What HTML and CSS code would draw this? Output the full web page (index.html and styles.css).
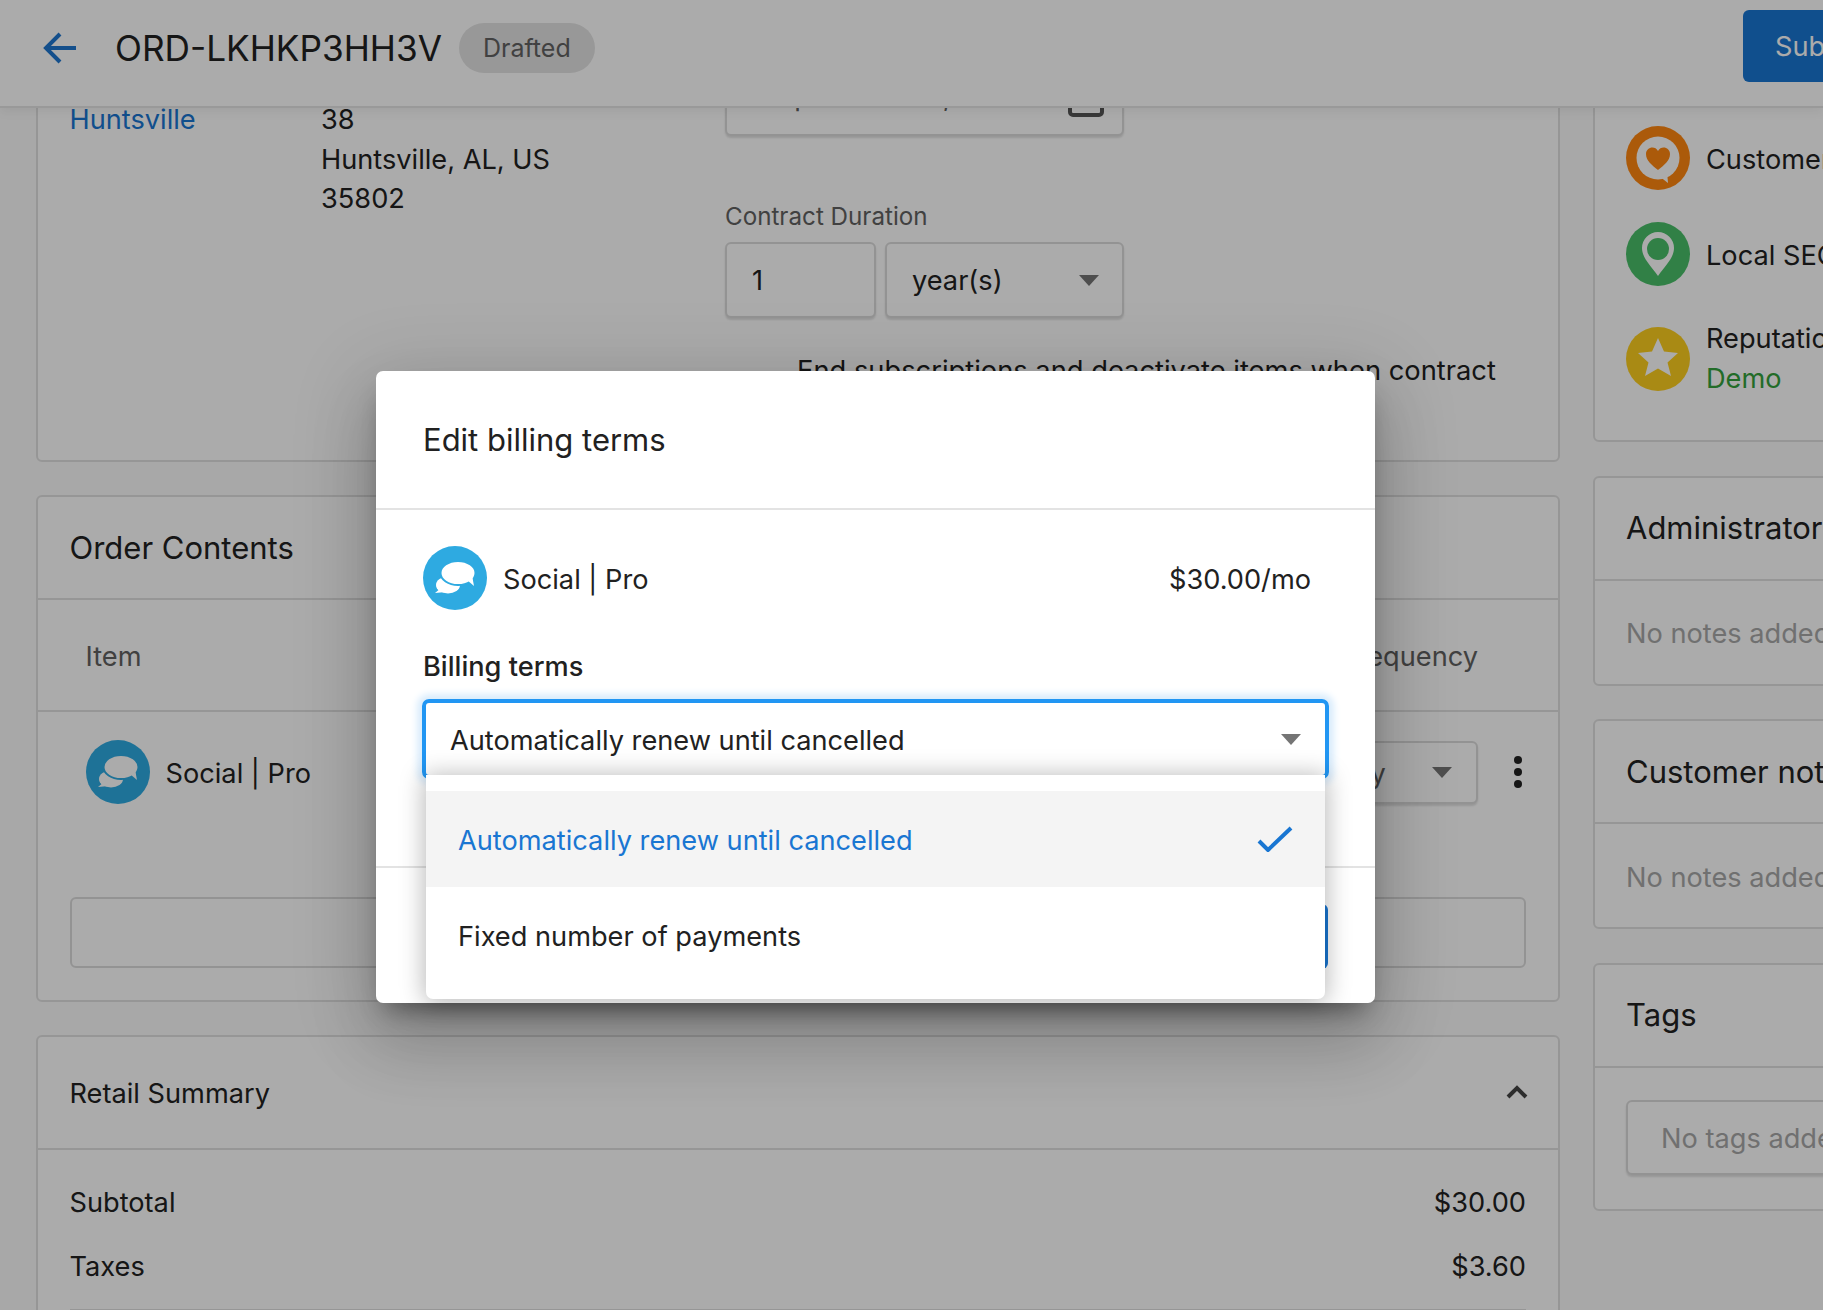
FILE: index.html
```html
<!DOCTYPE html>
<html>
  <head>
    <meta charset="UTF-8">
    <title>ORD-LKHKP3HH3V</title>
    <link rel="stylesheet" href="styles.css">
  </head>
  <body>
    <div class="page">
      <header class="topbar">
        <div class="topbar-main">
          <svg class="back-arrow" viewBox="0 0 34 32" width="34" height="32"><path d="M33 16H3M17 2L3 16l14 14" fill="none" stroke="#1e76d0" stroke-width="4"/></svg>
          <h1 class="order-id">ORD-LKHKP3HH3V</h1>
          <span class="badge">Drafted</span>
        </div>
        <button class="btn-primary" type="button">Submit</button>
      </header>

      <div class="scroller">
        <div class="columns">
          <main class="col-main">
            <section class="card card-details">
              <div class="details-location"><a class="link">Huntsville</a></div>
              <div class="details-address">38<br>Huntsville, AL, US<br>35802</div>
              <div class="details-form">
                <div class="field field-date">
                  <span class="date-text">September 30, 2022</span>
                  <svg class="calendar" viewBox="0 0 36 36" width="36" height="36"><rect x="2" y="2" width="32" height="32" rx="3" fill="none" stroke="#555" stroke-width="4"/></svg>
                </div>
                <div class="field-label">Contract Duration</div>
                <div class="duration">
                  <div class="field field-qty"><span class="txt-small">1</span></div>
                  <div class="field field-unit"><span class="txt-small">year(s)</span><span class="caret"></span></div>
                </div>
                <div class="end-option">End subscriptions and deactivate items when contract ends</div>
              </div>
            </section>

            <section class="card card-contents">
              <div class="card-head"><h2>Order Contents</h2></div>
              <div class="table-head"><span>Item</span><span>Frequency</span></div>
              <div class="table-row">
                <div class="product">
                  <svg class="app-icon" viewBox="0 0 64 64" width="64" height="64"><use href="#icon-social"/></svg>
                  <span class="txt">Social | Pro</span>
                </div>
                <div class="row-tools">
                  <div class="field field-freq"><span class="txt">Monthly</span><span class="caret"></span></div>
                  <div class="kebab"><i></i><i></i><i></i></div>
                </div>
              </div>
              <div class="field field-wide"></div>
            </section>

            <section class="card card-summary">
              <div class="card-head summary-head">
                <span class="txt-small">Retail Summary</span>
                <svg viewBox="0 0 22 14" width="22" height="14"><path d="M2 12l9-9 9 9" fill="none" stroke="#444" stroke-width="4"/></svg>
              </div>
              <div class="summary-rows">
                <div class="summary-row"><span>Subtotal</span><span>$30.00</span></div>
                <div class="summary-row"><span>Taxes</span><span>$3.60</span></div>
                <div class="summary-rule"></div>
                <div class="summary-row"><span>Total</span><span>$33.60</span></div>
              </div>
            </section>
          </main>

          <aside class="col-side">
            <section class="card card-apps">
              <div class="app-row">
                <svg class="app-icon" viewBox="0 0 64 64" width="64" height="64">
                  <circle cx="32" cy="32" r="32" fill="#ff8710"/>
                  <circle cx="32" cy="32" r="21.5" fill="#fff"/>
                  <path d="M33 50l9 7-1-11z" fill="#fff"/>
                  <path d="M32 44C26 39 20 35 20 28c0-7 9-9 12-3 3-6 12-4 12 3 0 7-6 11-12 16z" fill="#ff8710"/>
                </svg>
                <span class="txt">Customer Voice</span>
              </div>
              <div class="app-row">
                <svg class="app-icon" viewBox="0 0 64 64" width="64" height="64">
                  <circle cx="32" cy="32" r="32" fill="#4abf69"/>
                  <path d="M32 54C25 44 16 36 16 26a16 16 0 0 1 32 0C48 36 39 44 32 54z" fill="#fff"/>
                  <circle cx="32" cy="27" r="11" fill="#4abf69"/>
                </svg>
                <span class="txt">Local SEO</span>
              </div>
              <div class="app-row">
                <svg class="app-icon" viewBox="0 0 64 64" width="64" height="64">
                  <circle cx="32" cy="32" r="32" fill="#fdce1f"/>
                  <path d="M32 11l6 13.500 14 1.500-10.500 9.500L45 49l-13-7.500L19 49l3.500-13.500L12 26l14-1.500z" fill="#fff"/>
                </svg>
                <div class="app-lines">Reputation Management<br><span class="demo">Demo</span></div>
              </div>
            </section>

            <section class="card card-note">
              <div class="card-head"><h2>Administrator notes</h2></div>
              <div class="note-body">No notes added</div>
            </section>

            <section class="card card-note">
              <div class="card-head"><h2>Customer notes</h2></div>
              <div class="note-body">No notes added</div>
            </section>

            <section class="card card-tags">
              <div class="card-head"><h2>Tags</h2></div>
              <div class="tags-body"><div class="field field-tags"><span class="txt">No tags added</span></div></div>
            </section>
          </aside>
        </div>
      </div>

      <div class="backdrop"></div>

      <div class="modal">
        <div class="modal-head">Edit billing terms</div>
        <div class="modal-body">
          <div class="modal-product">
            <div class="product">
              <svg class="app-icon" viewBox="0 0 64 64" width="64" height="64"><use href="#icon-social"/></svg>
              <span class="txt">Social | Pro</span>
            </div>
            <span class="modal-price txt">$30.00/mo</span>
          </div>
          <div class="modal-label">Billing terms</div>
          <div class="modal-select"><span class="txt">Automatically renew until cancelled</span><span class="caret"></span></div>
        </div>
        <div class="modal-foot">
          <button class="btn-primary btn-save" type="button">Save</button>
        </div>

        <ul class="dropdown">
          <li class="option option-active">
            <span class="txt">Automatically renew until cancelled</span>
            <svg viewBox="0 0 36 26" width="36" height="26"><path d="M2 15l9 9L34 2" fill="none" stroke="#1976d2" stroke-width="4"/></svg>
          </li>
          <li class="option"><span class="txt">Fixed number of payments</span></li>
        </ul>
      </div>
    </div>

    <svg class="icon-defs" width="0" height="0">
      <symbol id="icon-social" viewBox="0 0 64 64">
        <circle cx="32" cy="32" r="32" fill="#2eaae1"/>
        <ellipse cx="25" cy="39" rx="12" ry="8.500" fill="#fff"/>
        <path d="M18 42l-6 5 11-1z" fill="#fff"/>
        <ellipse cx="35" cy="27" rx="17.500" ry="12" fill="#fff" stroke="#2eaae1" stroke-width="2"/>
        <path d="M44 34l7 6-2-11z" fill="#fff"/>
      </symbol>
    </svg>
  </body>
</html>
```

FILE: styles.css
```css
* {
  box-sizing: border-box;
}
html, body {
  margin: 0;
  height: 100%;
  overflow: hidden;
}
body {
  font-family: Inter, "Liberation Sans", sans-serif;
  font-size: 27.200px;
  line-height: 40px;
  color: #212121;
  background-color: #fbfbfb;
}
h1, h2, ul {
  margin: 0;
  padding: 0;
  font-weight: 400;
}
.page {
  position: relative;
  width: 1823px;
  height: 1310px;
  overflow: hidden;
}
.icon-defs {
  position: absolute;
}
.txt {
  padding-top: 4px;
}
.txt-small {
  padding-top: 2px;
}

/* top bar */
.topbar {
  position: relative;
  z-index: 1;
  display: flex;
  align-items: center;
  height: 108px;
  padding: 0 0 14px 43px;
  background-color: #fff;
  border-bottom: 2px solid #e4e4e4;
  box-shadow: 0 4px 10px rgba(0, 0, 0, 0.06);
}
.topbar-main {
  flex: 0 0 1700px;
  display: flex;
  align-items: center;
  padding-top: 4px;
}
.back-arrow {
  margin-right: 38px;
}
.order-id {
  font-size: 35.200px;
  margin-right: 17px;
}
.badge {
  height: 50px;
  line-height: 50px;
  padding: 0 24px;
  border-radius: 25px;
  background-color: #e3e3e3;
  color: #616161;
  font-size: 25px;
}
.btn-primary {
  flex: none;
  height: 72px;
  width: 200px;
  text-align: left;
  padding: 0 32px;
  border: none;
  border-radius: 6px;
  background-color: #1976d2;
  color: #fff;
  font-family: inherit;
  font-size: 27.200px;
}

/* columns */
.scroller {
  height: 1202px;
  overflow: hidden;
}
.columns {
  display: grid;
  grid-template-columns: 1524px 510px;
  gap: 33px;
  padding-left: 36px;
  margin-top: -60px;
}
.col-main, .col-side {
  display: flex;
  flex-direction: column;
  gap: 33px;
}
.col-side {
  gap: 33.500px;
}
.card {
  background-color: #fff;
  border: 2px solid #e0e0e0;
  border-radius: 6px;
}
.card-head {
  display: flex;
  align-items: center;
  height: 103px;
  padding: 0 31.500px;
  border-bottom: 2px solid #e0e0e0;
}
.card-head h2 {
  font-size: 31px;
  white-space: nowrap;
}
.link {
  color: #1976d2;
}
.field {
  display: flex;
  align-items: center;
  background-color: #fff;
  border: 2px solid #dcdcdc;
  border-radius: 6px;
  box-shadow: 0 2px 2px rgba(0, 0, 0, 0.12);
}
.caret {
  display: block;
  width: 0;
  height: 0;
  border-left: 10px solid transparent;
  border-right: 10px solid transparent;
  border-top: 11px solid #757575;
}

/* order details */
.card-details {
  display: flex;
  height: 414px;
}
.details-location {
  flex: 0 0 283px;
  padding: 50px 0 0 31.500px;
}
.details-address {
  flex: 0 0 404px;
  padding-top: 50px;
  line-height: 39.600px;
}
.details-form {
  flex: 0 0 800px;
  padding-top: 11px;
}
.field-date {
  width: 399px;
  height: 75px;
  padding-left: 34px;
  justify-content: space-between;
  padding-right: 18px;
  color: #616161;
  white-space: nowrap;
}
.date-text {
  padding-bottom: 3px;
}
.field-label {
  margin-top: 68px;
  margin-bottom: 12px;
  height: 26px;
  line-height: 26px;
  font-size: 24.200px;
  color: #616161;
}
.duration {
  display: flex;
  gap: 9px;
  width: 399px;
}
.field-qty {
  width: 151px;
  height: 76px;
  padding-left: 25px;
}
.field-unit {
  flex: 1;
  height: 76px;
  padding: 0 23px 0 25px;
  justify-content: space-between;
}
.end-option {
  margin-top: 33px;
  padding-left: 72px;
  width: 800px;
  font-size: 27.300px;
}

/* order contents */
.card-contents {
  height: 507px;
}
.table-head {
  display: flex;
  justify-content: space-between;
  height: 112px;
  padding: 3px 80px 0 47.500px;
  align-items: center;
  color: #616161;
  border-bottom: 2px solid #e0e0e0;
}
.table-row {
  display: flex;
  justify-content: space-between;
  align-items: center;
  margin-top: 28px;
  padding: 0 36px 0 47.500px;
}
.product {
  display: flex;
  align-items: center;
  gap: 16px;
}
.app-icon {
  flex: none;
}
.row-tools {
  display: flex;
  align-items: center;
  gap: 36px;
}
.field-freq {
  width: 221px;
  height: 63px;
  padding: 0 24px 0 23px;
  justify-content: space-between;
  color: #616161;
}
.kebab {
  display: flex;
  flex-direction: column;
  align-items: center;
  gap: 4px;
  width: 8px;
}
.kebab i {
  display: block;
  width: 8px;
  height: 8px;
  border-radius: 50%;
  background-color: #212121;
}
.field-wide {
  height: 71px;
  margin: 93px 32px 0 31.500px;
  box-shadow: none;
}

/* retail summary */
.summary-head {
  justify-content: space-between;
  height: 113px;
  padding-right: 30px;
}
.summary-head svg {
  margin-bottom: 2px;
}
.summary-rows {
  padding: 21px 32px 0 31.500px;
}
.summary-row {
  display: flex;
  justify-content: space-between;
  height: 64px;
  align-items: center;
}
.summary-rule {
  height: 2px;
  margin-top: 10px;
  background-color: #e0e0e0;
}

/* sidebar */
.card-apps {
  height: 394px;
  padding: 76px 0 0 31px;
  white-space: nowrap;
}
.app-row {
  display: flex;
  align-items: center;
  gap: 16px;
  margin-bottom: 32px;
}
.app-lines {
  padding-top: 1px;
}
.demo {
  color: #33a13c;
}
.card-note {
  height: 210px;
}
.col-side .card-head {
  padding: 0 31px;
}
.note-body {
  display: flex;
  align-items: center;
  height: 103px;
  padding: 4px 31px 0;
  color: #a8a8a8;
  white-space: nowrap;
}
.tags-body {
  padding: 32px 31px 34px;
}
.field-tags {
  height: 75px;
  padding-left: 33px;
  color: #a8a8a8;
  white-space: nowrap;
}

/* dialog */
.backdrop {
  position: absolute;
  inset: 0;
  z-index: 2;
  background-color: rgba(0, 0, 0, 0.33);
}
.modal {
  position: absolute;
  z-index: 3;
  left: 376px;
  top: 371px;
  width: 999px;
  height: 632px;
  display: flex;
  flex-direction: column;
  background-color: #fff;
  border-radius: 7px;
  box-shadow: 0 40px 65px 5px rgba(0, 0, 0, 0.14), 0 15px 78px 14px rgba(0, 0, 0, 0.12), 0 16px 24px -10px rgba(0, 0, 0, 0.4);
}
.modal-head {
  height: 139px;
  display: flex;
  align-items: center;
  padding: 0 47px;
  font-size: 31px;
  border-bottom: 2px solid #e3e3e3;
}
.modal-body {
  padding: 36px 48px 0 47px;
}
.modal-product {
  display: flex;
  justify-content: space-between;
  align-items: center;
  padding-right: 16px;
}
.modal-label {
  margin-top: 41px;
  margin-bottom: 16px;
  height: 32px;
  line-height: 32px;
  font-weight: 500;
}
.modal-select {
  display: flex;
  align-items: center;
  justify-content: space-between;
  height: 80px;
  margin: 0 -2px 0 -1px;
  padding: 0 24px;
  border: 4px solid #2196f3;
  border-radius: 7px;
  box-shadow: 0 0 7px 5px #d9ecfc;
  white-space: nowrap;
}
.modal-foot {
  margin-top: auto;
  height: 137px;
  padding: 36px 47px 0;
  display: flex;
  justify-content: flex-end;
  border-top: 2px solid #e3e3e3;
}
.btn-save {
  height: 65px;
  width: 140px;
  text-align: center;
  padding: 0;
}
.dropdown {
  position: absolute;
  left: 50px;
  top: 404px;
  width: 899px;
  height: 224px;
  padding-top: 16px;
  list-style: none;
  background-color: #fff;
  border-radius: 0 0 7px 7px;
  box-shadow: 0 2px 24px 2px rgba(0, 0, 0, 0.28);
}
.option {
  display: flex;
  align-items: center;
  justify-content: space-between;
  height: 96px;
  padding: 0 32px;
}
.option-active {
  background-color: #f4f4f4;
  color: #1976d2;
}
```
